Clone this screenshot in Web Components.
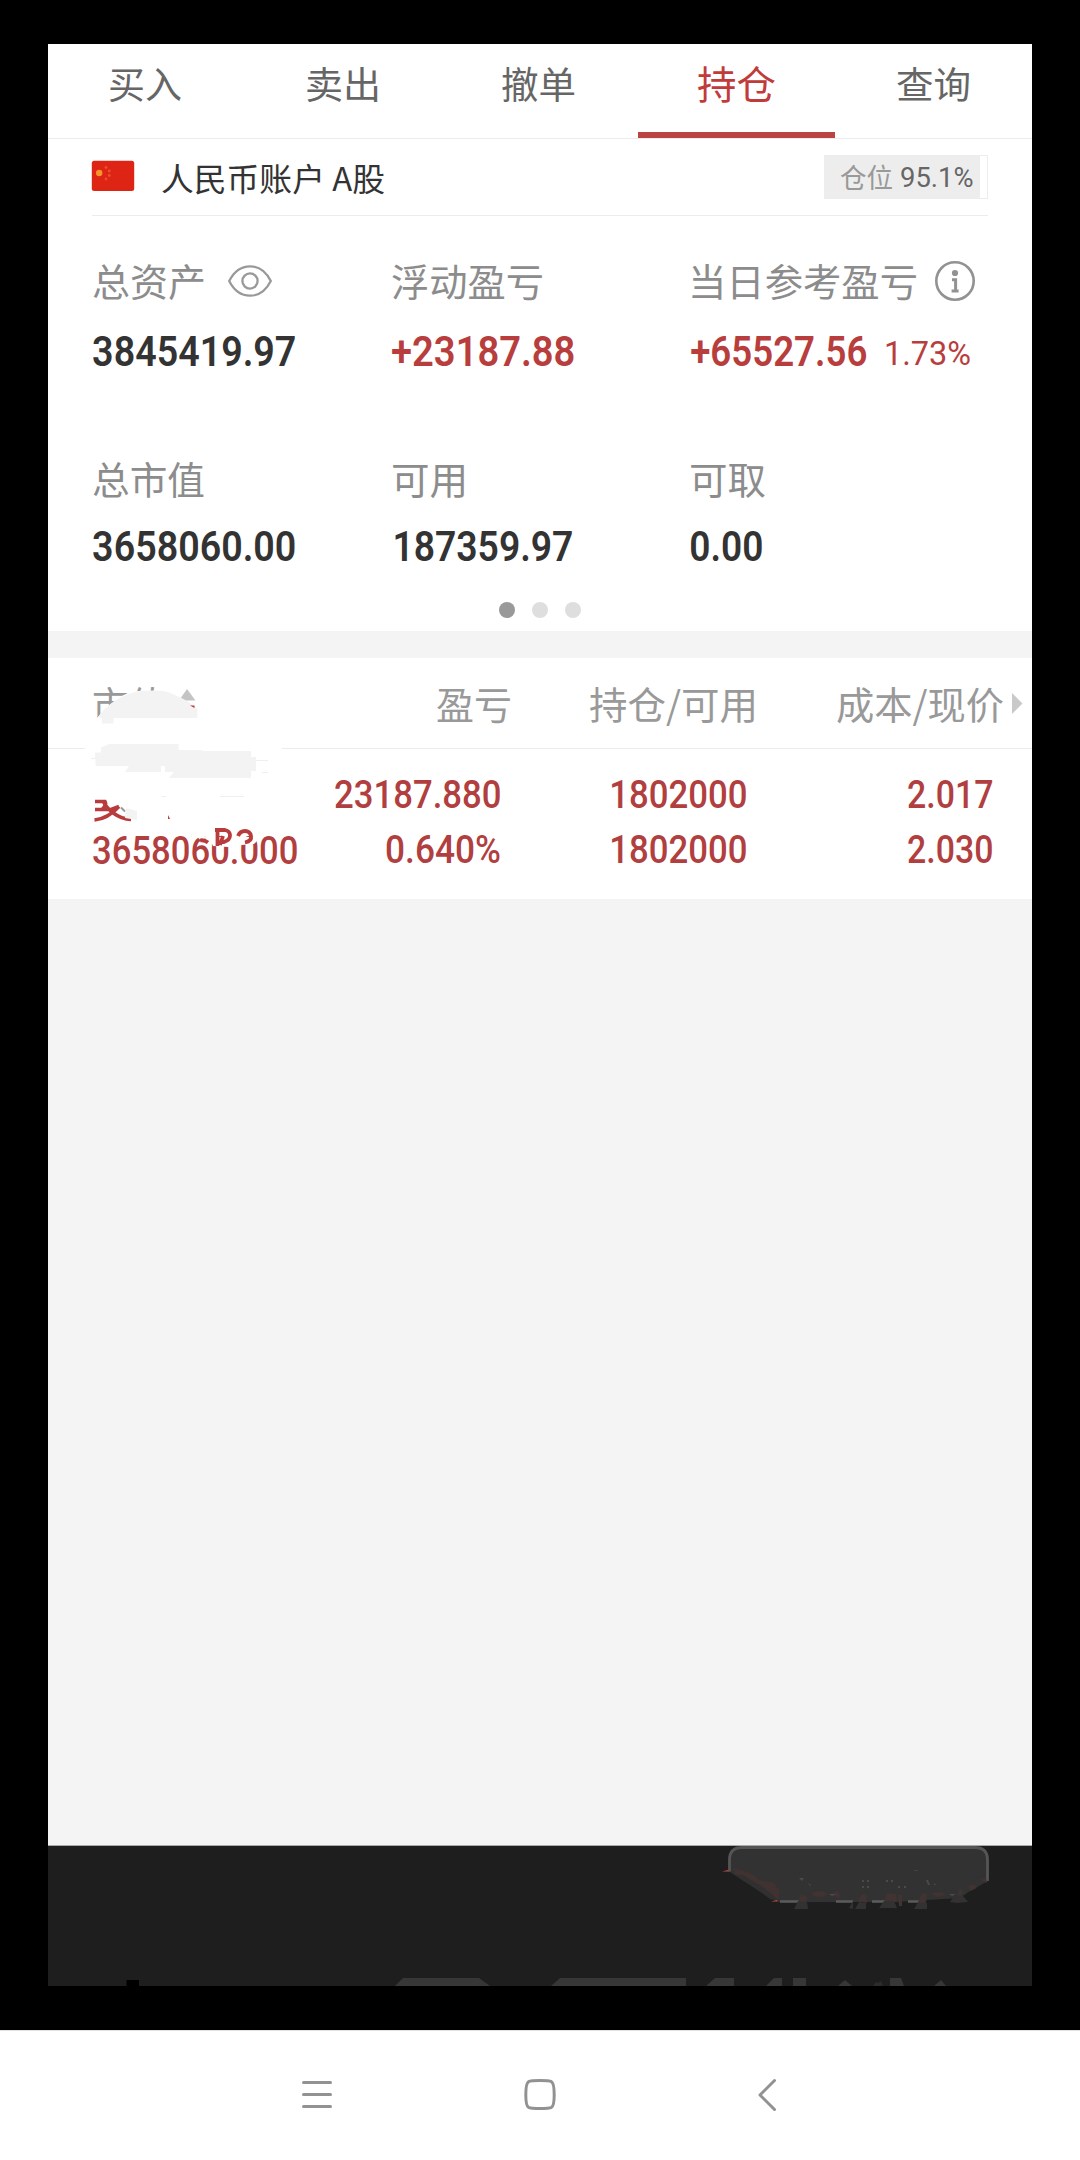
<!DOCTYPE html>
<html lang="zh-CN">
<head>
<meta charset="utf-8">
<title>持仓</title>
<style>
html,body{margin:0;padding:0;background:#000}
body{width:1080px;height:2160px;overflow:hidden}
</style>
</head>
<body>
<trade-screen></trade-screen>
<script>
const CJK = '"Noto Sans CJK SC", sans-serif';
const NUM = 'Roboto, "Noto Sans CJK SC", sans-serif';

function define(name, html, setup) {
  customElements.define(name, class extends HTMLElement {
    connectedCallback() {
      if (this.shadowRoot) return;
      const root = this.attachShadow({ mode: 'open' });
      const t = document.createElement('template');
      t.innerHTML = typeof html === 'function' ? html(this) : html;
      root.append(t.content.cloneNode(true));
      if (setup) setup(this, root);
    }
  });
}

/* A single line whose visible ink is exactly `w` px wide; `h` is its line box. */
define('fit-text', el => {
  const text = el.getAttribute('text');
  const size = +el.getAttribute('size'), w = +el.getAttribute('w'), h = +el.getAttribute('h') || 48;
  const weight = el.getAttribute('weight') || 400;
  const family = el.hasAttribute('num') ? NUM : CJK;
  const ctx = document.createElement('canvas').getContext('2d');
  ctx.font = `${weight} ${size}px ${family}`;
  const m = ctx.measureText(text);
  const k = w / (m.actualBoundingBoxLeft + m.actualBoundingBoxRight);
  return `<style>
    :host{display:block;flex:none;width:${w}px;height:${h}px;white-space:nowrap}
    span{display:inline-block;font:${weight} ${size}px/${h}px ${family.replace(/"/g, "'")};transform-origin:0 0;
      transform:translateX(${m.actualBoundingBoxLeft * k}px) scaleX(${k})}
  </style><span>${text}</span>`;
});

define('trade-tab', el => `<style>
  :host{flex:1;display:flex;flex-direction:column;align-items:center;justify-content:space-between;height:94px;padding-top:15px;box-sizing:border-box;color:#666}
  :host([active]){color:#c13b3b}
  ::slotted(*){margin-right:2px}
  :host([active]) ::slotted(*){margin:-1px 0 0}
  i{display:block;width:100%;height:6px;background:transparent}
  :host([active]) i{background:#b94444}
</style><slot></slot><i></i>`);

define('metric-cell', `<style>
  :host{display:flex;flex-direction:column;width:299px;color:#333}
  :host([up]){color:#b83e3e}
  .l{display:flex;align-items:center;color:#8c8c8c;height:48px}
  .v{display:flex;align-items:flex-start;margin-top:var(--gap,22px);padding-left:var(--indent,1px)}
</style><div class="l"><slot name="label"></slot></div><div class="v"><slot></slot></div>`);

define('eye-icon', `<style>:host{display:block;margin-left:24px;height:32px}svg{display:block}</style>
<svg width="44" height="32" viewBox="0 0 44 32" fill="none" stroke="#999" stroke-width="2.3"><path d="M1.2 16C6 6.5 13 1.3 22 1.3S38 6.5 42.8 16C38 25.500 31 30.700 22 30.700S6 25.500 1.200 16Z"/><circle cx="22" cy="16" r="7.600"/></svg>`);

define('info-icon', `<style>:host{display:block;margin-left:19px;height:40px}svg{display:block}</style>
<svg width="40" height="40" viewBox="0 0 40 40" fill="none" stroke="#929292"><circle cx="20" cy="20" r="18.700" stroke-width="2.600"/><circle cx="20" cy="12" r="3.100" fill="#929292" stroke="none"/><path d="M17 18.700h3.600v10.800M16.600 30h7" stroke-width="3"/></svg>`);

define('page-dots', `<style>:host{display:flex;justify-content:center;gap:17px}i{width:16px;height:16px;border-radius:50%;background:#dedede}i:first-of-type{background:#999}</style><i></i><i></i><i></i>`);

define('account-bar', `<style>
  :host{display:flex;align-items:flex-start;margin:0 44px;height:76px;border-bottom:1px solid #ececec;color:#333}
  svg{display:block;margin:21px 0 0 -1px}
  .name{margin:14px 0 0 27px}
  .pos{display:flex;margin:16px 0 0 auto;width:164px;height:44px;box-sizing:border-box;border:1px solid #ededed;background:linear-gradient(#ededed,#ededed) 0 0/155px 100% no-repeat;color:#999;padding-left:15px}
  .pos .n{color:#666;margin-left:9px}
</style>
<svg width="44" height="32" viewBox="0 0 44 32"><rect x=".8" y=".8" width="42.400" height="30.200" rx="2.500" fill="#dd2415"/><circle cx="8.200" cy="13" r="3.200" fill="#f7952c"/><g fill="#e9502a"><circle cx="15" cy="7.500" r="1.400"/><circle cx="18.300" cy="11" r="1.400"/><circle cx="18.300" cy="15.500" r="1.400"/><circle cx="15" cy="19" r="1.400"/></g></svg>
<fit-text class="name" text="人民币账户 A股" size="32" w="222"></fit-text>
<div class="pos"><fit-text text="仓位" size="27" w="52" h="41"></fit-text><fit-text class="n" num text="95.1%" size="28" w="72" h="43"></fit-text></div>`);

define('asset-panel', `<style>
  :host{display:block;height:415px;padding:41px 0 0 44px;box-sizing:border-box}
  .row{display:flex}
  .row + .row{margin-top:77px;--gap:19px}
  .row [slot=label][text]{position:relative;top:-1px}
  .pct{margin:3px 0 0 20px}
  page-dots{margin:32px 44px 0 0}
</style>
<div class="row">
  <metric-cell><fit-text slot="label" style="margin-left:1px" text="总资产" size="38" w="111"></fit-text><eye-icon slot="label"></eye-icon>
    <fit-text num weight="600" text="3845419.97" size="43" w="202"></fit-text></metric-cell>
  <metric-cell up><fit-text slot="label" style="margin-left:1px" text="浮动盈亏" size="38" w="150"></fit-text>
    <fit-text num weight="600" text="+23187.88" size="43" w="182"></fit-text></metric-cell>
  <metric-cell up><fit-text slot="label" style="margin-left:2px" text="当日参考盈亏" size="38" w="224"></fit-text><info-icon slot="label"></info-icon>
    <fit-text num weight="600" text="+65527.56" size="43" w="175"></fit-text><fit-text class="pct" num text="1.73%" size="33" w="84"></fit-text></metric-cell>
</div>
<div class="row">
  <metric-cell><fit-text slot="label" style="margin-left:1px" text="总市值" size="38" w="111"></fit-text>
    <fit-text num weight="600" text="3658060.00" size="43" w="202"></fit-text></metric-cell>
  <metric-cell style="--indent:4px"><fit-text slot="label" style="margin-left:2px" text="可用" size="38" w="71"></fit-text>
    <fit-text num weight="600" text="187359.97" size="43" w="177"></fit-text></metric-cell>
  <metric-cell><fit-text slot="label" style="margin-left:1px" text="可取" size="38" w="74"></fit-text>
    <fit-text num weight="600" text="0.00" size="43" w="71"></fit-text></metric-cell>
</div>
<page-dots></page-dots>`);

define('holding-table', `<style>
  :host{display:block;position:relative;height:241px;background:#fff;color:#b13f3f}
  .head,.line{display:grid;grid-template-columns:253px 199px 246px 1fr;justify-items:end;box-sizing:border-box}
  .head{height:91px;border-bottom:1px solid #ececec;color:#999;padding:21px 29px 0 0;grid-template-columns:253px 209px 244px 1fr}
  .line{padding-right:40px;height:55px}
  .first{justify-self:start;margin-left:45px}
  .body{padding-top:22px}
  .smudge{position:absolute;inset:0;display:block}
</style>
<div class="head"><fit-text class="first" text="市值" size="38" w="72"></fit-text><fit-text text="盈亏" size="38" w="73"></fit-text><fit-text text="持仓/可用" size="38" w="164"></fit-text><fit-text text="成本/现价" size="38" w="166"></fit-text></div>
<div class="body">
<div class="line"><span></span><fit-text num weight="500" text="23187.880" size="38" w="165"></fit-text><fit-text num weight="500" text="1802000" size="38" w="134"></fit-text><fit-text num weight="500" text="2.017" size="38" w="84"></fit-text></div>
<div class="line"><fit-text class="first" style="margin-top:1px" num weight="500" text="3658060.000" size="38" w="204"></fit-text><fit-text num weight="500" text="0.640%" size="38" w="114"></fit-text><fit-text num weight="500" text="1802000" size="38" w="134"></fit-text><fit-text num weight="500" text="2.030" size="38" w="84"></fit-text></div>
</div>
<svg class="smudge" width="984" height="241" viewBox="48 658 984 241">
  <path d="M1012 693v21l10.500-10.500z" fill="#c9c9c9"/>
  <path d="M179 700.500 187 689 195.500 700.500z" fill="#c4c4c4"/>
  <path d="M85 746h197v5H85z" fill="#fff"/>
  <path d="M97 718C104 710 108 705 114 702C119 696 129 692 137 691H168C178 696 190 702 198 712V730H97z" fill="#fff"/>
  <path d="M97.500 717.500C107 705 118 696 137 691.500Q152 689.500 166 691.500C179 696 190 702 197.500 709V718H113.500V723.500H102V718z" fill="#f3f3f3"/>
  <path d="M190 705.500h4.500v2.500z" fill="#b83c3c"/>
  <path d="M95 758.500v-6h6v-5l8-3.500h69.500v6h23v1h49.500v6h5v14h-5v7h-82l5-6h-9v-6h-4v6h-36l4-6h-33.500v-6.500z" fill="#f3f3f3"/>
  <path d="M91 758.500h4M256 760.500h12M262 772.500h6M161 796.500h5M220 796.500h24" stroke="#efefef" stroke-width="1"/>
  <g fill="none" stroke="#b83c3c" stroke-width="3.600"><path d="M95 801.500h10q2 3-3 8M95 809.500h16l8-3M94.500 820C106 819 113 813 119 806.500M103 801C107 809 117 819 131 819.500"/></g>
  <path d="M121 807.500l4 4" stroke="#999" stroke-width="2"/>
  <path d="M126 808l11 3v9l-12-2z" fill="#f3f3f3"/>
  <path d="M168 815l2 4h-2z" fill="#b83c3c"/>
  <path d="M193 832l14 5-6 4zM209 837h48v4l-3 3-12 1-14 2-15-1z" fill="#fff"/>
  <g fill="none" stroke="#b83c3c" stroke-width="3.800"><path d="M200 840.500q4-1 8 2M217.500 830V846M215 830h10q5 1 5 5.500t-6 6.500h-3M223 836l-3 9M238 836q2-5 7-5t6 5-6 6.500"/></g>
</svg>`);

define('redacted-footer', `<style>:host{display:block;height:140px;background:#1e1e1e;border-top:1px solid #aaa}svg{display:block}</style>
<svg width="984" height="140" viewBox="48 1846 984 140">
  <path d="M728.500 1871V1860Q728.500 1847.500 741 1847.500H976Q988 1847.500 988 1860V1881L970 1891 960 1898 895 1902H779L757 1889 742 1880z" fill="#323232"/>
  <path d="M729.500 1871.500V1860Q729.500 1847.500 742 1847.500H975Q987.500 1847.500 987.500 1860V1881" fill="none" stroke="#555" stroke-width="2.800"/>
  <path d="M780 1901.500h20M836 1901.500h17M872 1901.500h18M908 1901.500h16" stroke="#5c5c5c" stroke-width="2.700"/>
  <path d="M733 1868.500q16 1 27 12l14 2 6 9-2 8-18-12-14-9-11-5z" fill="#403230"/>
  <path d="M735 1875l8 0 17 10 13 10 5 6-8-2-17-12z" fill="#313030"/>
  <path d="M722 1871.500l6-1.500 1 1.500zM771 1901.500l6-1.500 1 1.500z" fill="#c74d3d"/>
  <g fill="#403332"><path d="M798 1902l3-8 7 3-3 7zM812 1892l10-1 7 3-8 3-8-1zM833 1892l5-1 3 6-4 1zM858 1901l4-7 4 1 1 8zM884 1902l3-9 9 1 1 8zM898 1895h4v11h-3zM918 1902l4-9 5 1-1 9zM932 1893l10-1 4 3-10 2zM957 1896l3-8 3 4-2 5zM968 1886l6-2 3 4-7 3zM980 1880l6-2 1 5z"/></g>
  <g fill="#323232"><path d="M794 1909l4-8 9 1 1 7zM855 1909l4-7 7 1v6zM849 1908l4-7v8zM879 1908l5-7h10l3 7zM914 1909l4-7 9 1v6zM950 1902l5-7 8 1 5 6-11 1z"/></g>
  <g fill="#4a4a4a"><path d="M799 1878h5l-2 3zM808 1883l3 2-1 1zM829 1894h8l-5 2zM913 1870h6l-3 1zM949 1894h7l-4 2z"/><path d="M862 1880h2v2h-2zM867 1880h2v2h-2zM862 1886h2v2h-2zM867 1886h2v2h-2zM886 1880h2v2h-2zM891 1880h2v2h-2zM898 1886h2v2h-2zM904 1886h2v2h-2zM926 1880h2l2 5h-2zM934 1883l2 2h-2z"/></g>
  <g fill="#373737"><path d="M395 1986l8-8h76l11 8zM551 1986l9-8h126v8zM706 1986l9-8h19v8zM766 1986l8-8h8v8zM793 1978h13v8h-13zM838 1986l7-6 7 6zM890 1978h11l3 8h-14zM934 1986l7-6 5 6z"/><path d="M873 1986l3-4 2 1 3-2 2 5z" fill="#2c2c2c"/></g>
  <path d="M126.500 1980h12.500v6h-12.500z" fill="#000"/>
</svg>`);

define('system-nav', `<style>:host{display:block;height:130px;background:#fff;border-top:1px solid #e2e2e2;box-sizing:border-box}
.r{display:flex;padding:46px 302px 0;justify-content:space-between}svg{display:block}</style>
<div class="r"><svg width="34" height="36" viewBox="0 0 34 36" stroke="#929292" stroke-width="3" stroke-linecap="round"><path d="M1.500 5.500h27M1.500 17.500h27M1.500 29.500h27"/></svg>
<svg style="margin-right:14px" width="34" height="36" viewBox="0 0 34 36" fill="none" stroke="#929292" stroke-width="3"><path d="M17 3.500c6 0 9.500.2 11.500 1.200 2.300 1.500 2.700 6 2.700 13s-.4 11.300-2.700 12.600c-2 1-5.500 1.200-11.500 1.200s-9.500-.2-11.500-1.200c-2.300-1.300-2.700-5.600-2.700-12.600s.4-11.500 2.700-13C7.500 3.700 11 3.500 17 3.500z"/></svg>
<svg width="20" height="36" viewBox="0 0 20 36" fill="none" stroke="#929292" stroke-width="3" stroke-linecap="round" stroke-linejoin="round"><path d="M16.500 3.500 2 18 16.500 32.500"/></svg></div>`);

define('trade-screen', `<style>
  :host{display:flex;flex-direction:column;width:1080px;height:2160px;background:#000}
  main{margin:44px 48px;height:1942px;background:#f4f4f4;display:flex;flex-direction:column}
  nav{display:flex;background:#fff;border-bottom:1px solid #ececec}
  .top{background:#fff;margin-bottom:27px}
  redacted-footer{margin-top:auto}
</style>
<main>
  <div class="top">
    <nav>
      <trade-tab><fit-text text="买入" size="37" w="72"></fit-text></trade-tab>
      <trade-tab><fit-text text="卖出" size="37" w="71"></fit-text></trade-tab>
      <trade-tab><fit-text text="撤单" size="37" w="73"></fit-text></trade-tab>
      <trade-tab active><fit-text text="持仓" size="39" w="77"></fit-text></trade-tab>
      <trade-tab><fit-text text="查询" size="37" w="72"></fit-text></trade-tab>
    </nav>
    <account-bar></account-bar>
    <asset-panel></asset-panel>
  </div>
  <holding-table></holding-table>
  <redacted-footer></redacted-footer>
</main>
<system-nav></system-nav>`);
</script>
</body>
</html>
